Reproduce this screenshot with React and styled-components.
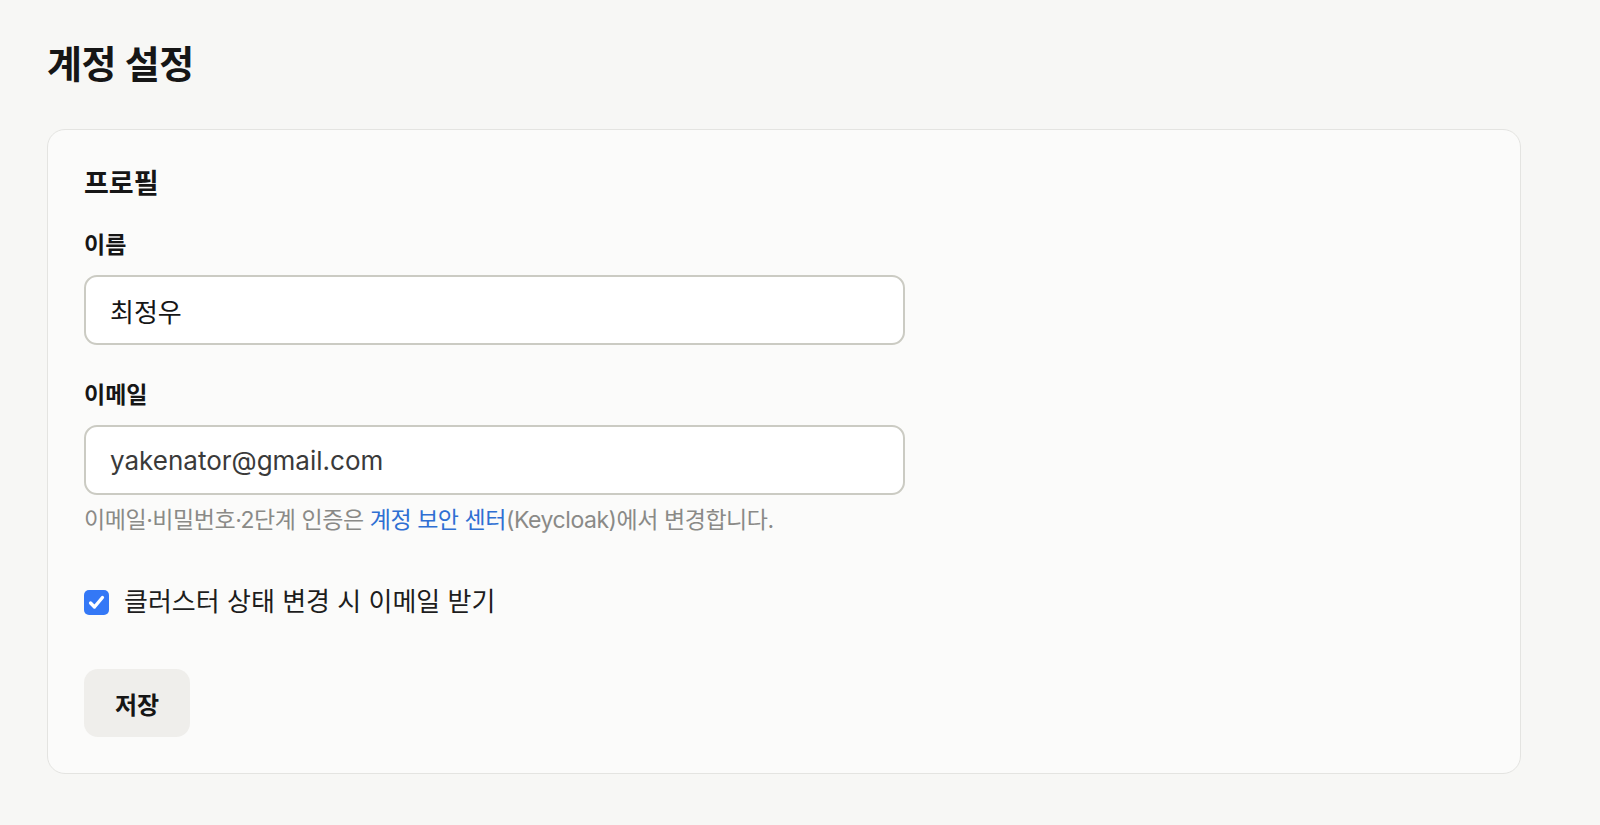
import React, { useState } from "react";
import styled, { createGlobalStyle } from "styled-components";

const GlobalStyle = createGlobalStyle`
  html, body {
    margin: 0;
    padding: 0;
    background: #f7f7f5;
  }
  body {
    font-family: Inter, "Noto Sans CJK KR", sans-serif;
    color: #161616;
  }
`;

const Page = styled.div`
  padding: 42px 47px 40px;
  min-height: 825px;
  box-sizing: border-box;
`;

const Title = styled.h1`
  margin: 0 0 43px;
  font-size: 38px;
  line-height: 44px;
  font-weight: 700;
  letter-spacing: -0.4px;
`;

const Card = styled.section`
  width: 1474px;
  box-sizing: border-box;
  padding: 36px;
  background: #fbfbfa;
  border: 1.5px solid #e4e4e1;
  border-radius: 18px;
`;

const SectionTitle = styled.h2`
  margin: 0 0 28px;
  font-size: 27px;
  line-height: 36px;
  font-weight: 700;
`;

const Field = styled.div`
  display: flex;
  flex-direction: column;
  width: 821px;
  margin-bottom: ${(p) => p.$gap || 0}px;
`;

const Label = styled.label`
  font-size: 23px;
  line-height: 30px;
  font-weight: 600;
  margin-bottom: 15px;
`;

const Input = styled.input`
  height: 70px;
  box-sizing: border-box;
  padding: 0 24px;
  font-family: Inter, "Noto Sans CJK KR", sans-serif;
  font-size: 26px;
  color: ${(p) => (p.$muted ? "#3a3a3a" : "#161616")};
  background: #ffffff;
  border: 2px solid #cbcbc3;
  border-radius: 13px;
  outline: none;
`;

const Hint = styled.p`
  margin: 9px 0 0;
  font-size: 23px;
  line-height: 32px;
  color: #8a8a87;
  letter-spacing: -0.45px;
`;

const HintLink = styled.a`
  color: #2f6fd3;
  text-decoration: none;
`;

const CheckRow = styled.label`
  display: flex;
  align-items: center;
  gap: 15px;
  margin-top: 50px;
  font-size: 26px;
  line-height: 32px;
  color: #1d1d1d;
  cursor: pointer;
`;

const Box = styled.span`
  width: 25px;
  height: 25px;
  flex-shrink: 0;
  border-radius: 5px;
  display: flex;
  align-items: center;
  justify-content: center;
  background: ${(p) => (p.$on ? "#3478f6" : "#ffffff")};
  border: ${(p) => (p.$on ? "none" : "1.5px solid #b8b8b0")};
  box-sizing: border-box;
`;

const HiddenCheck = styled.input`
  display: none;
`;

const SaveButton = styled.button`
  display: block;
  margin-top: 51px;
  height: 68px;
  padding: 0 31px;
  border: none;
  border-radius: 14px;
  background: #efeeeb;
  font-family: Inter, "Noto Sans CJK KR", sans-serif;
  font-size: 24px;
  font-weight: 600;
  color: #161616;
  cursor: pointer;
`;

function CheckIcon() {
  return (
    <svg width="19" height="19" viewBox="0 0 16 16" fill="none">
      <path
        d="M3 8.4 L6.3 11.8 L13 3.8"
        stroke="#ffffff"
        strokeWidth="2.8"
        strokeLinecap="round"
        strokeLinejoin="round"
      />
    </svg>
  );
}

export default function App() {
  const [name, setName] = useState("최정우");
  const [notify, setNotify] = useState(true);

  return (
    <Page>
      <GlobalStyle />
      <Title>계정 설정</Title>
      <Card>
        <SectionTitle>프로필</SectionTitle>
        <Field $gap={35}>
          <Label htmlFor="name">이름</Label>
          <Input id="name" value={name} onChange={(e) => setName(e.target.value)} />
        </Field>
        <Field>
          <Label htmlFor="email">이메일</Label>
          <Input id="email" value="yakenator@gmail.com" readOnly $muted />
          <Hint>
            이메일·비밀번호·2단계 인증은 <HintLink href="#">계정 보안 센터</HintLink>
            (Keycloak)에서 변경합니다.
          </Hint>
        </Field>
        <CheckRow>
          <HiddenCheck
            type="checkbox"
            checked={notify}
            onChange={(e) => setNotify(e.target.checked)}
          />
          <Box $on={notify}>{notify && <CheckIcon />}</Box>
          클러스터 상태 변경 시 이메일 받기
        </CheckRow>
        <SaveButton>저장</SaveButton>
      </Card>
    </Page>
  );
}
